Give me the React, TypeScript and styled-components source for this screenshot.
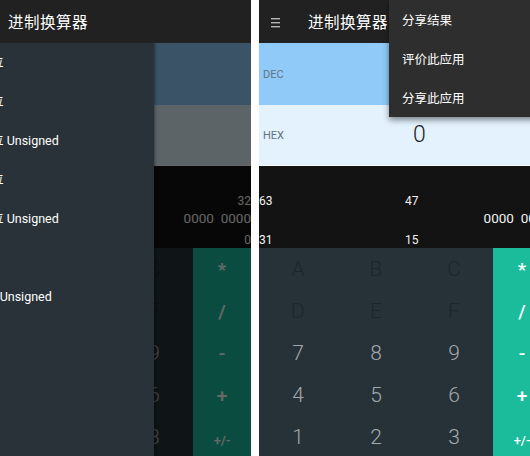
import * as React from 'react'
import styled, { createGlobalStyle } from 'styled-components'

const GlobalStyle = createGlobalStyle`
    html, body {
        margin: 0;
        padding: 0;
        background: #ffffff;
    }
    body {
        font-family: Roboto, "Noto Sans CJK SC", sans-serif;
    }
`

const drawerItems = ['64位', '32位', '32位 Unsigned', '16位', '16位 Unsigned', '8位', '8位 Unsigned']
const menuItems = ['分享结果', '评价此应用', '分享此应用']
const keys = ['A', 'B', 'C', 'D', 'E', 'F', '7', '8', '9', '4', '5', '6', '1', '2', '3']
const ops = ['*', '/', '-', '+', '+/-']

const Hamburger = () => (
    <svg width="11" height="11" viewBox="0 0 11 11">
        <rect x="1" y="1" width="9" height="1.4" fill="#b5b5b5" />
        <rect x="1" y="5" width="9" height="1.4" fill="#b5b5b5" />
        <rect x="1" y="9" width="9" height="1.4" fill="#b5b5b5" />
    </svg>
)

interface ScreenProps {
    drawer?: boolean
    menu?: boolean
}

const Screen = ({ drawer, menu }: ScreenProps) => (
    <Phone>
        <Toolbar>
            <MenuButton><Hamburger /></MenuButton>
            <Title>进制换算器</Title>
        </Toolbar>
        <ValueRow bg="#90caf9">
            <Radix>DEC</Radix>
        </ValueRow>
        <ValueRow bg="#e3f2fd" last>
            <Radix>HEX</Radix>
            <Value>0</Value>
        </ValueRow>
        <Bits>
            <BitLabels>
                <span>63</span>
                <Split><span>47</span><span>32</span></Split>
            </BitLabels>
            <BitString>{'0000  0000'}</BitString>
            <BitLabels bottom>
                <span>31</span>
                <Split><span>15</span><span>0</span></Split>
            </BitLabels>
        </Bits>
        <Keypad>
            <Digits>
                {keys.map((k, i) => <Key key={k} disabled={i < 6}>{k}</Key>)}
            </Digits>
            <Ops>
                {ops.map(o => <Op key={o} small={o.length > 1}>{o}</Op>)}
            </Ops>
        </Keypad>

        {drawer && <Scrim />}
        {drawer && (
            <Drawer>
                {drawerItems.map(d => <DrawerItem key={d}>{d}</DrawerItem>)}
            </Drawer>
        )}
        {menu && (
            <Popup>
                {menuItems.map(m => <PopupItem key={m}>{m}</PopupItem>)}
            </Popup>
        )}
    </Phone>
)

export default () => (
    <>
        <GlobalStyle />
        <Page>
            <Crop width={251}>
                <Shifted offset={41}>
                    <Screen drawer />
                </Shifted>
            </Crop>
            <Crop width={271}>
                <Screen menu />
            </Crop>
        </Page>
    </>
)

const Page = styled.div`
    display: flex;
    gap: 8px;
    width: 530px;
    height: 456px;
    overflow: hidden;
`

const Crop = styled.div<{ width: number }>`
    width: ${p => p.width}px;
    height: 456px;
    overflow: hidden;
    flex-shrink: 0;
`

const Shifted = styled.div<{ offset: number }>`
    margin-left: -${p => p.offset}px;
`

const Phone = styled.div`
    position: relative;
    width: 292px;
    height: 456px;
    display: flex;
    flex-direction: column;
    background: #263238;
    overflow: hidden;
`

const Toolbar = styled.div`
    position: relative;
    z-index: 3;
    height: 43px;
    flex-shrink: 0;
    background: #212121;
    display: flex;
    align-items: center;
`

const MenuButton = styled.div`
    display: flex;
    margin-left: 11px;
    margin-top: 1px;
`

const Title = styled.div`
    margin-left: 27px;
    color: #ffffff;
    font-family: "Noto Sans CJK SC", sans-serif;
    font-size: 15.5px;
    letter-spacing: 0.5px;
    margin-top: -1px;
`

const ValueRow = styled.div<{ bg: string; last?: boolean }>`
    height: ${p => (p.last ? 60 : 62)}px;
    flex-shrink: 0;
    background: ${p => p.bg};
    border-bottom: ${p => (p.last ? '1px solid #f7fbfe' : 'none')};
    display: flex;
    align-items: center;
`

const Radix = styled.div`
    width: 150px;
    padding-left: 4px;
    font-family: Roboto, sans-serif;
    font-size: 11px;
    color: #5f7480;
`

const Value = styled.div`
    font-family: Roboto, sans-serif;
    font-weight: 300;
    font-size: 23px;
    color: #1e1e1e;
    margin-top: -1px;
`

const Bits = styled.div`
    height: 82px;
    flex-shrink: 0;
    box-sizing: border-box;
    padding-top: 28px;
    background: #131313;
    color: #f2f2f2;
    font-family: Roboto, sans-serif;
    overflow: hidden;
`

const BitLabels = styled.div<{ bottom?: boolean }>`
    display: grid;
    grid-template-columns: 146px 1fr;
    height: 15px;
    line-height: 15px;
    font-size: 12px;
    margin-top: ${p => (p.bottom ? 5 : 0)}px;
`

const Split = styled.div`
    display: flex;
    justify-content: space-between;
`

const BitString = styled.div`
    height: 19px;
    line-height: 19px;
    text-align: right;
    white-space: pre;
    font-size: 13.5px;
`

const Keypad = styled.div`
    flex: 1;
    display: flex;
    background: #263238;
`

const Digits = styled.div`
    width: 234px;
    display: grid;
    grid-template-columns: repeat(3, 78px);
    grid-auto-rows: 42px;
`

const Key = styled.div<{ disabled?: boolean }>`
    display: flex;
    align-items: center;
    justify-content: center;
    font-family: Roboto, sans-serif;
    font-weight: 300;
    font-size: 21px;
    color: ${p => (p.disabled ? '#1d262b' : '#a3a8ab')};
`

const Ops = styled.div`
    width: 58px;
    background: #1abc9c;
    display: grid;
    grid-auto-rows: 42px;
`

const Op = styled.div<{ small?: boolean }>`
    display: flex;
    align-items: center;
    justify-content: center;
    font-family: Roboto, sans-serif;
    font-weight: 500;
    font-size: ${p => (p.small ? 13 : 19)}px;
    color: #ffffff;
    padding-top: ${p => (p.small ? 6 : 0)}px;
`

const Scrim = styled.div`
    position: absolute;
    top: 43px;
    left: 0;
    right: 0;
    bottom: 0;
    background: rgba(0, 0, 0, 0.59);
    z-index: 1;
`

const Drawer = styled.div`
    position: absolute;
    top: 43px;
    left: 0;
    bottom: 0;
    width: 195px;
    background: #283238;
    z-index: 2;
    box-shadow: 1px 0 3px rgba(0, 0, 0, 0.4);
`

const DrawerItem = styled.div`
    height: 39px;
    line-height: 39px;
    padding-left: 18px;
    white-space: nowrap;
    color: #ffffff;
    font-family: Roboto, "Noto Sans CJK SC", sans-serif;
    font-size: 12.5px;
`

const Popup = styled.div`
    position: absolute;
    top: 0;
    left: 130px;
    width: 170px;
    background: #2e2e2e;
    z-index: 4;
    box-shadow: 0 3px 6px rgba(0, 0, 0, 0.45);
`

const PopupItem = styled.div`
    height: 39px;
    line-height: 39px;
    padding-left: 13px;
    color: #ffffff;
    font-family: "Noto Sans CJK SC", sans-serif;
    font-size: 12.5px;
`
